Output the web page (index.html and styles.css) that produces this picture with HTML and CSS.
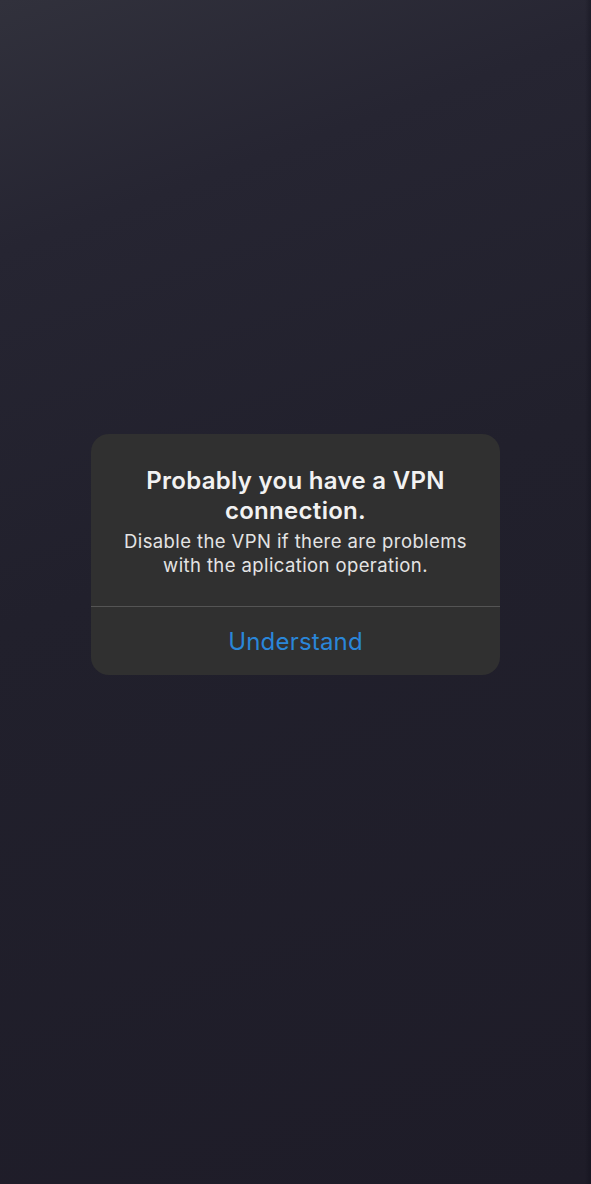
FILE: index.html
```html
<!DOCTYPE html>
<html lang="en">
<head>
<meta charset="utf-8">
<title>VPN alert</title>
<link rel="stylesheet" href="styles.css">
</head>
<body>
<div class="screen">
  <div class="alert" role="alertdialog">
    <div class="alert-body">
      <h1 class="alert-title">Probably you have a VPN connection.</h1>
      <p class="alert-message">Disable the VPN if there are problems with the aplication operation.</p>
    </div>
    <button class="alert-action" type="button">Understand</button>
  </div>
</div>
</body>
</html>
```

FILE: styles.css
```css
html, body {
  margin: 0;
  padding: 0;
}

body {
  width: 591px;
  height: 1184px;
  overflow: hidden;
  font-family: Inter, "Noto Sans", Roboto, sans-serif;
}

.screen {
  box-sizing: border-box;
  width: 591px;
  height: 1184px;
  padding-top: 434px;
  display: flex;
  flex-direction: column;
  align-items: center;
  background:
    linear-gradient(to right, rgba(0,0,0,0) 585px, rgba(10,10,20,0.35) 591px),
    linear-gradient(160deg, #31313c 0%, #262532 18%, #21202c 45%, #1e1c28 100%);
}

.alert {
  width: 409px;
  background: #303030;
  border-radius: 18px;
  overflow: hidden;
  display: flex;
  flex-direction: column;
}

.alert-body {
  padding: 32px 20px 29px;
  text-align: center;
  border-bottom: 1px solid #545454;
}

.alert-title {
  margin: 0;
  font-size: 24px;
  line-height: 30px;
  font-weight: 600;
  color: #f2f2f2;
  letter-spacing: 0.3px;
  padding: 0 20px;
}

.alert-message {
  margin: 3px 0 0;
  font-size: 18.5px;
  line-height: 24px;
  font-weight: 400;
  color: #e4e4e4;
  letter-spacing: 0.4px;
}

.alert-action {
  height: 68px;
  border: 0;
  background: transparent;
  font-family: inherit;
  font-size: 24px;
  font-weight: 400;
  color: #2a86d9;
  letter-spacing: 0.2px;
  padding: 0;
  cursor: pointer;
}
```
